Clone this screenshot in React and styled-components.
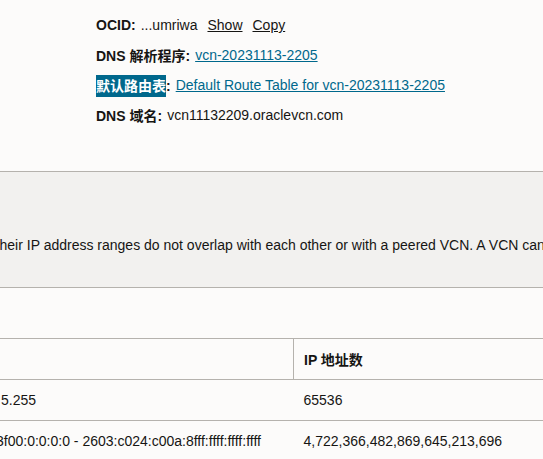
import styled, { createGlobalStyle } from "styled-components";

const GlobalStyle = createGlobalStyle`
  body {
    margin: 0;
    background: #fcfbfa;
    color: #161513;
    font-family: "Liberation Sans", Arial, "Noto Sans CJK SC", sans-serif;
    font-size: 14px;
  }
`;

const details = [
  { label: "DNS 解析程序", value: "vcn-20231113-2205", link: true },
  { label: "默认路由表", value: "Default Route Table for vcn-20231113-2205", link: true, selected: true },
  { label: "DNS 域名", value: "vcn11132209.oraclevcn.com" },
];

const rows = [
  { range: "5.255", count: "65536" },
  { range: "3f00:0:0:0:0 - 2603:c024:c00a:8fff:ffff:ffff:ffff", count: "4,722,366,482,869,645,213,696", clip: true },
];

const App = () => {
  return (
    <Page>
      <GlobalStyle />
      <Details>
        <Row>
          <Label>OCID:</Label>
          <span>...umriwa</span>
          <Action>Show</Action>
          <Action>Copy</Action>
        </Row>
        {details.map((d) => (
          <Row key={d.label}>
            <Label>
              {d.selected ? <Selected>{d.label}</Selected> : d.label}:
            </Label>
            {d.link ? <Link>{d.value}</Link> : <span>{d.value}</span>}
          </Row>
        ))}
      </Details>

      <Notice>
        <NoticeText>
          Their IP address ranges do not overlap with each other or with a peered VCN. A VCN cannot be
          resized after it is created.
        </NoticeText>
      </Notice>

      <Table>
        <thead>
          <tr>
            <Th />
            <Th>IP 地址数</Th>
          </tr>
        </thead>
        <tbody>
          {rows.map((r) => (
            <tr key={r.count}>
              <Td $clip={r.clip}>{r.range}</Td>
              <Td>{r.count}</Td>
            </tr>
          ))}
        </tbody>
      </Table>
    </Page>
  );
};

const Page = styled.div`
  width: 543px;
  height: 459px;
  overflow: hidden;
`;

const Details = styled.div`
  padding: 10px 0 0 96px;
  height: 171px;
  box-sizing: border-box;
`;

const Row = styled.div`
  display: flex;
  align-items: center;
  height: 30px;
  gap: 5px;
  white-space: nowrap;
`;

const Label = styled.span`
  font-weight: 700;
`;

const Selected = styled.span`
  background: #00688c;
  color: #fff;
  padding: 3px 0;
`;

const Link = styled.a`
  color: #00688c;
  text-decoration: underline;
  cursor: pointer;
`;

const Action = styled.a`
  color: #161513;
  text-decoration: underline;
  margin-left: 5px;
  cursor: pointer;
`;

const Notice = styled.div`
  height: 117px;
  box-sizing: border-box;
  background: #f2f1ef;
  border-top: 1px solid #b5b2ad;
  border-bottom: 1px solid #b5b2ad;
  padding-top: 64px;
`;

const NoticeText = styled.p`
  margin: 0;
  line-height: 18px;
  white-space: nowrap;
  text-indent: -9px;
  overflow: hidden;
`;

const Table = styled.table`
  margin-top: 50px;
  width: 560px;
  border-collapse: collapse;
  border-top: 1px solid #b5b2ad;
  table-layout: fixed;

  th:first-child,
  td:first-child {
    width: 283px;
  }
`;

const Th = styled.th`
  height: 40px;
  padding: 0 10px;
  text-align: left;
  font-weight: 700;
  border-bottom: 1px solid #b5b2ad;

  &:first-child {
    padding-left: 0;
    border-right: 1px solid #b5b2ad;
  }
`;

const Td = styled.td`
  height: 40px;
  padding: 0 10px;
  border-bottom: 1px solid #b5b2ad;
  white-space: nowrap;
  overflow: hidden;

  &:first-child {
    padding-left: 1px;
    text-indent: ${(p) => (p.$clip ? "-5px" : "0")};
  }
`;

export default App;
